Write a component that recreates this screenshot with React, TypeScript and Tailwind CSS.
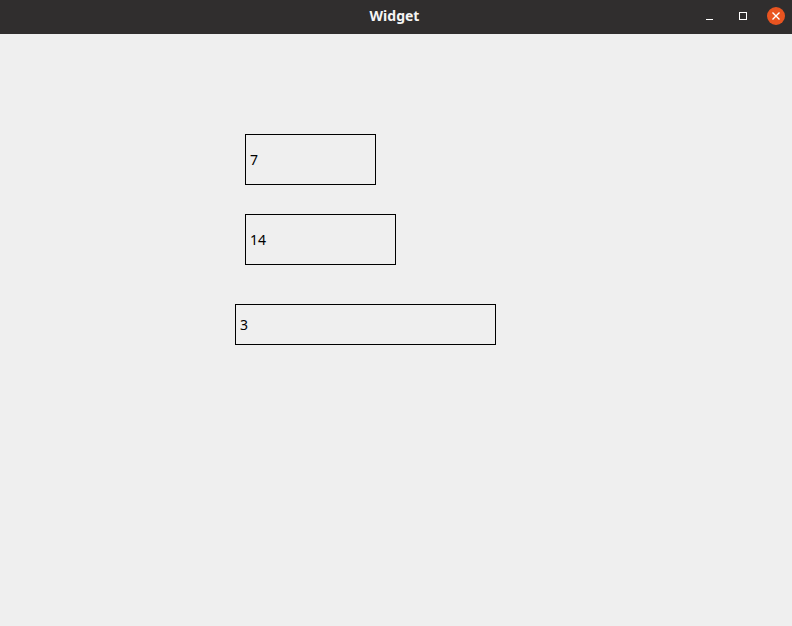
import React from "react";

const fields = [
  { value: "7", className: "ml-[245px] mt-[100px] h-[51px] w-[131px]" },
  { value: "14", className: "ml-[245px] mt-[29px] h-[51px] w-[151px]" },
  { value: "3", className: "ml-[235px] mt-[39px] h-[41px] w-[261px]" },
];

export default function App() {
  return (
    <div className="flex h-[626px] w-[792px] flex-col bg-[#efefef] font-['Noto_Sans',sans-serif]">
      {/* title bar */}
      <div className="relative flex h-[34px] shrink-0 items-center justify-center bg-[#302e2e]">
        <span className="mb-[3px] mr-[3px] text-[14px] font-bold text-[#f5f5f5]">Widget</span>
        <div className="absolute right-[6px] top-0 flex h-full items-center">
          <button className="flex h-[34px] w-[34px] items-center justify-center">
            <span className="mt-[4px] block h-px w-[7px] bg-white" />
          </button>
          <button className="mr-[6px] flex h-[34px] w-[34px] items-center justify-center">
            <span className="mb-[3px] block h-[8px] w-[8px] border border-white" />
          </button>
          <button className="flex h-[34px] w-[20px] items-center justify-center">
            <span className="mb-[3px] flex h-[18px] w-[18px] items-center justify-center rounded-full bg-[#e95420]">
              <svg width="10" height="10" viewBox="0 0 10 10">
                <path d="M1.5 1.5 L8.5 8.5 M8.5 1.5 L1.5 8.5" stroke="white" strokeWidth="1.4" />
              </svg>
            </span>
          </button>
        </div>
      </div>

      {/* fields */}
      <div className="flex flex-col items-start">
        {fields.map((f, i) => (
          <div
            key={i}
            className={`flex items-center border border-black pl-[4px] text-[14px] text-black ${f.className}`}
          >
            {f.value}
          </div>
        ))}
      </div>
    </div>
  );
}
